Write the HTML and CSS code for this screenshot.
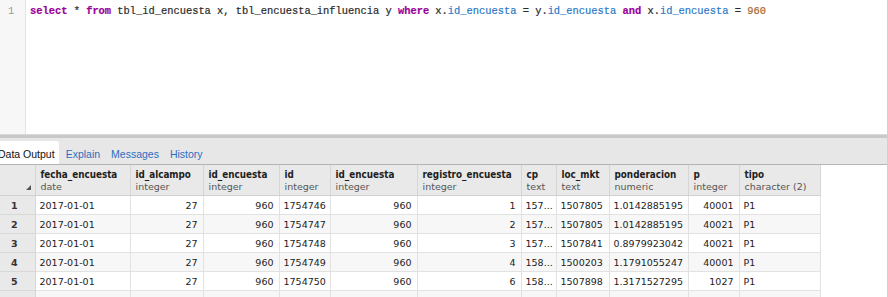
FILE: index.html
```html
<!DOCTYPE html>
<html lang="es">
<head>
<meta charset="utf-8" />
<title>Query</title>
<link rel="stylesheet" href="styles.css">
</head>
<body>
<div class="app">
	<div class="editor">
		<div class="gutter"><span>1</span></div>
		<div class="code"><span class="kw">select</span> * <span class="kw">from</span> tbl_id_encuesta x, tbl_encuesta_influencia y <span class="kw">where</span> x.<span class="col">id_encuesta</span> = y.<span class="col">id_encuesta</span> <span class="kw">and</span> x.<span class="col">id_encuesta</span> = <span class="num">960</span></div>
	</div>
	<div class="tabs">
		<span class="tab active">Data Output</span>
		<span class="tab">Explain</span>
		<span class="tab">Messages</span>
		<span class="tab">History</span>
	</div>
	<table class="grid">
		<colgroup>
			<col style="width:35px"><col style="width:95px"><col style="width:73px"><col style="width:76px">
			<col style="width:51px"><col style="width:87px"><col style="width:104px"><col style="width:35px">
			<col style="width:53px"><col style="width:79px"><col style="width:51px"><col style="width:81px">
		</colgroup>
		<thead>
			<tr>
				<th class="rn"><span class="grip"></span></th>
				<th><b>fecha_encuesta</b>date</th>
				<th><b>id_alcampo</b>integer</th>
				<th><b>id_encuesta</b>integer</th>
				<th><b>id</b>integer</th>
				<th><b>id_encuesta</b>integer</th>
				<th><b>registro_encuesta</b>integer</th>
				<th><b>cp</b>text</th>
				<th><b>loc_mkt</b>text</th>
				<th><b>ponderacion</b>numeric</th>
				<th><b>p</b>integer</th>
				<th><b>tipo</b>character (2)</th>
			</tr>
		</thead>
		<tbody>
			<tr><td class="rn">1</td><td>2017-01-01</td><td class="r">27</td><td class="r">960</td><td>1754746</td><td class="r">960</td><td class="r">1</td><td>157...</td><td>1507805</td><td>1.0142885195</td><td class="r">40001</td><td>P1</td></tr>
			<tr><td class="rn">2</td><td>2017-01-01</td><td class="r">27</td><td class="r">960</td><td>1754747</td><td class="r">960</td><td class="r">2</td><td>157...</td><td>1507805</td><td>1.0142885195</td><td class="r">40021</td><td>P1</td></tr>
			<tr><td class="rn">3</td><td>2017-01-01</td><td class="r">27</td><td class="r">960</td><td>1754748</td><td class="r">960</td><td class="r">3</td><td>157...</td><td>1507841</td><td>0.8979923042</td><td class="r">40021</td><td>P1</td></tr>
			<tr><td class="rn">4</td><td>2017-01-01</td><td class="r">27</td><td class="r">960</td><td>1754749</td><td class="r">960</td><td class="r">4</td><td>158...</td><td>1500203</td><td>1.1791055247</td><td class="r">40001</td><td>P1</td></tr>
			<tr><td class="rn">5</td><td>2017-01-01</td><td class="r">27</td><td class="r">960</td><td>1754750</td><td class="r">960</td><td class="r">6</td><td>158...</td><td>1507898</td><td>1.3171527295</td><td class="r">1027</td><td>P1</td></tr>
			<tr><td class="rn"></td><td></td><td></td><td></td><td></td><td></td><td></td><td></td><td></td><td></td><td></td><td></td></tr>
		</tbody>
	</table>
</div>
</body>
</html>
```
FILE: styles.css
```css
html, body {
	margin: 0;
	padding: 0;
	background: #fff;
	overflow: hidden;
}
.app {
	width: 887px;
	height: 297px;
	border-right: 1px solid #d0d0d0;
	overflow: hidden;
}
.editor {
	height: 134px;
	display: flex;
	border-bottom: 1px solid #dadada;
	font-family: "Liberation Mono", "Courier New", monospace;
	font-size: 10.4px;
	color: #2a2a2a;
}
.gutter {
	width: 26px;
	background: #f7f7f7;
	border-right: 1px solid #e4e4e4;
	color: #999;
	padding: 5px 0 0 8px;
	box-sizing: border-box;
}
.code {
	padding: 5px 0 0 4px;
	white-space: pre;
	-webkit-text-stroke: 0.2px;
}
.kw {
	color: #990099;
	font-weight: bold;
}
.col {
	color: #2a7ac8;
}
.num {
	color: #a8682c;
}
.tabs {
	height: 26px;
	border-top: 3px solid #c8c8c8;
	background: #e7e7e7;
	border-bottom: 1px solid #b4b4b4;
	display: flex;
	align-items: flex-end;
	margin-left: -6px;
	font-family: "Liberation Sans", Arial, sans-serif;
	font-size: 10.5px;
}
.tab {
	height: 23px;
	line-height: 27px;
	padding: 0 4px;
	margin-right: 3px;
	color: #2a6fbf;
	box-sizing: border-box;
}
.tab.active {
	background: #fff;
	color: #111;
	border-top-right-radius: 3px;
}
.grid {
	table-layout: fixed;
	border-collapse: collapse;
	width: 820px;
	font-family: "DejaVu Sans", Verdana, sans-serif;
	font-size: 9.5px;
	color: #222;
}
.grid th {
	height: 28px;
	background: #e9e9e9;
	border-right: 1px solid #d6d6d6;
	border-bottom: 1px solid #d0d0d0;
	text-align: left;
	font-weight: normal;
	color: #555;
	padding: 2px 4px 0 5px;
	line-height: 12px;
	vertical-align: middle;
	white-space: nowrap;
	overflow: hidden;
}
.grid th b {
	display: block;
	font-family: "DejaVu Sans Condensed", "DejaVu Sans", sans-serif;
	font-size: 9.8px;
	font-weight: bold;
	color: #1e1e1e;
}
.grid th.rn {
	position: relative;
}
.grip {
	position: absolute;
	right: 4px;
	bottom: 5px;
	width: 0;
	height: 0;
	border-left: 5px solid transparent;
	border-bottom: 5px solid #555;
}
.grid td {
	height: 17px;
	padding: 1px 5px 0 4px;
	border-right: 1px solid #e2e2e2;
	border-bottom: 1px solid #e2e2e2;
	white-space: nowrap;
	overflow: hidden;
}
.grid tbody tr:nth-child(even) td {
	background: #f7f7f7;
}
.grid td.rn {
	background: #e9e9e9;
	border-right-color: #d6d6d6;
	border-bottom-color: #d8d8d8;
	font-weight: bold;
	padding-left: 11px;
	color: #333;
}
.grid tbody tr:nth-child(even) td.rn {
	background: #e9e9e9;
}
.grid td.r {
	text-align: right;
}
```
